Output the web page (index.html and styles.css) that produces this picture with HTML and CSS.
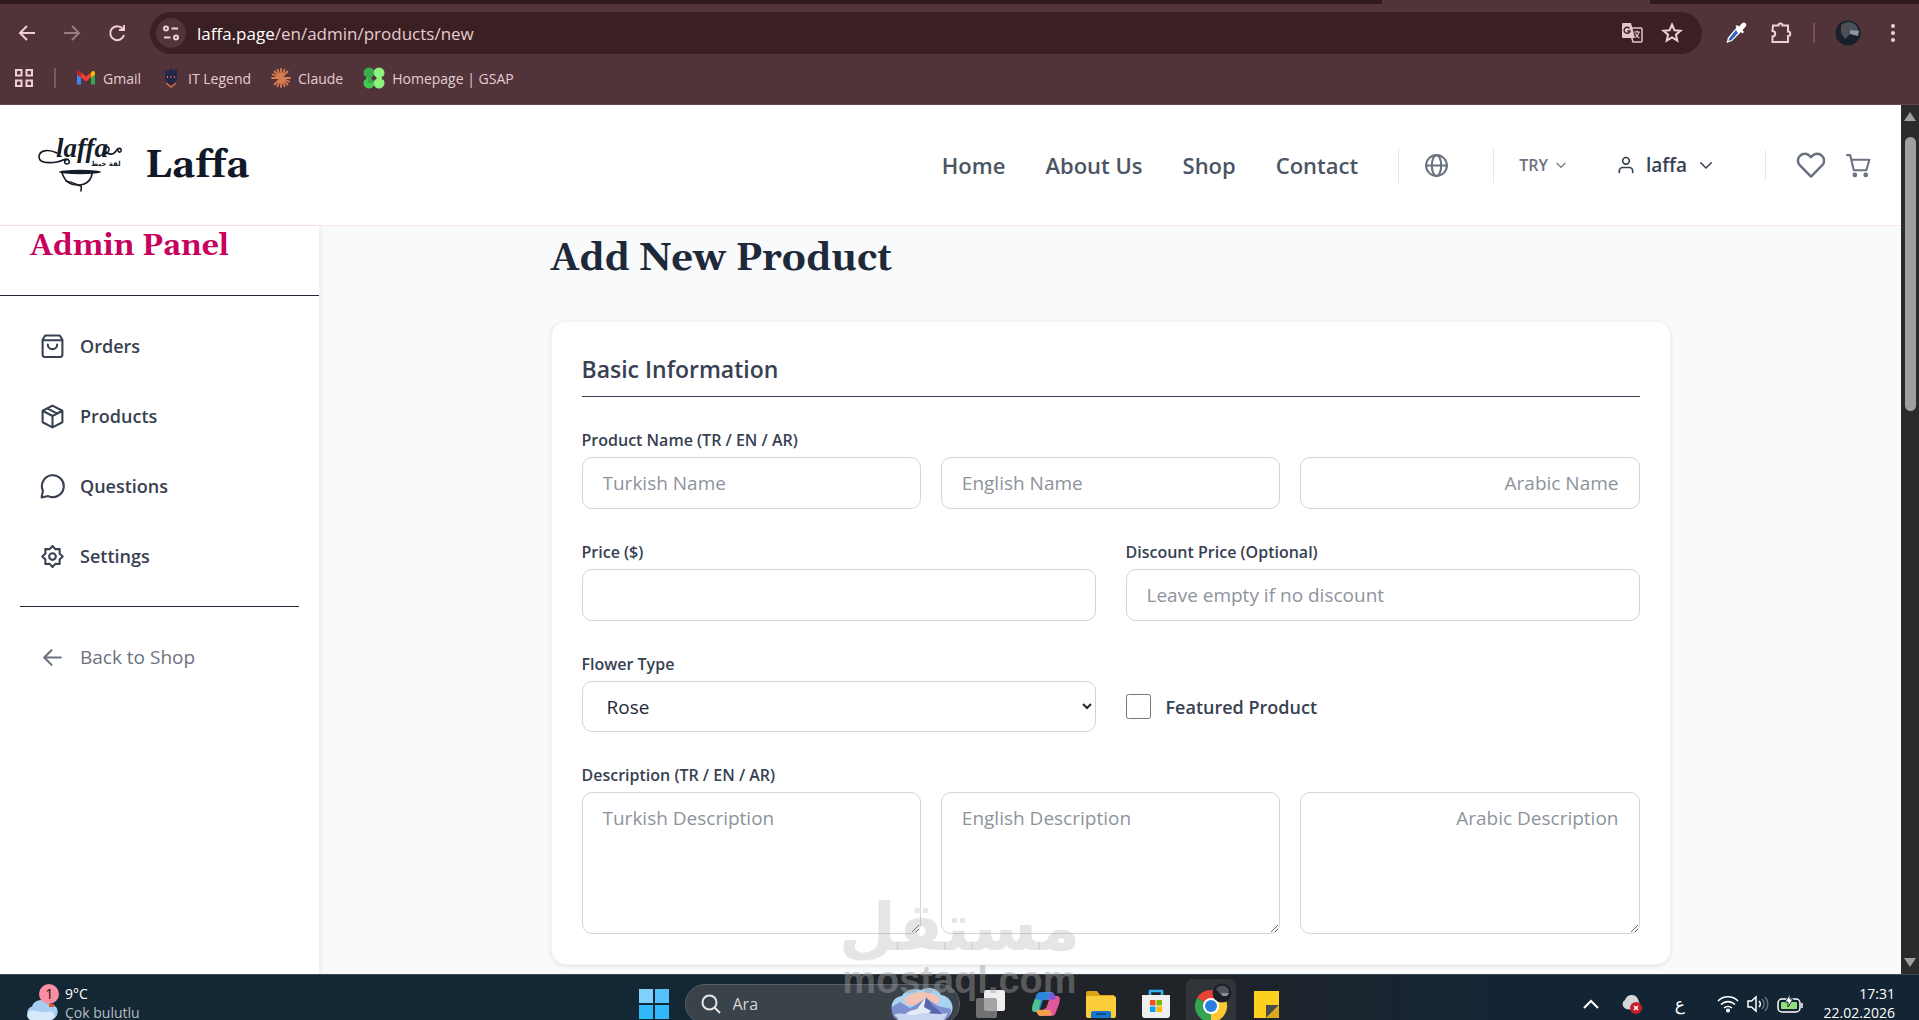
FILE: index.html
```html
<!DOCTYPE html>
<html lang="en">
<head>
    <meta charset="utf-8">
    <title>Laffa - Add New Product</title>
    <link rel="stylesheet" href="styles.css">
</head>
<body>
<!-- browser -->
<div class="browser">
    <div class="tabstrip"><span class="tab"></span></div>
    <div class="toolbar">
        <button class="tool" type="button" aria-label="Back">
            <svg width="24" height="24" viewBox="0 0 24 24" class="line"><path d="M20 12H5M12 5l-7 7 7 7"/></svg>
        </button>
        <button class="tool dim" type="button" aria-label="Forward">
            <svg width="24" height="24" viewBox="0 0 24 24" class="line"><path d="M4 12h15M12 5l7 7-7 7"/></svg>
        </button>
        <button class="tool" type="button" aria-label="Reload">
            <svg width="24" height="24" viewBox="0 0 24 24" class="line"><path d="M19 14a7 7 0 1 1-1.500-6.500L19 9M19 4v5h-5"/></svg>
        </button>
        <div class="address">
            <button class="site-info" type="button" aria-label="Site information">
                <svg width="20" height="20" viewBox="0 0 20 20" class="line"><circle cx="5" cy="5.500" r="2"/><path d="M10.500 5.500H17M3 14.500h6.500"/><circle cx="15" cy="14.500" r="2"/></svg>
            </button>
            <span class="url"><b>laffa.page</b>/en/admin/products/new</span>
            <button class="in-address" type="button" aria-label="Translate">
                <svg width="24" height="24" viewBox="0 0 24 24"><path d="M9 7h12a1 1 0 0 1 1 1v12a1 1 0 0 1-1 1h-8z" fill="none" stroke="#e3c5c9" stroke-width="1.500"/><path d="M3 2h8l4 15H3a1 1 0 0 1-1-1V3a1 1 0 0 1 1-1z" fill="#e3c5c9"/><path d="M9.500 7.500A3 3 0 1 0 10 10H7.500" fill="none" stroke="#3a1f23" stroke-width="1.400"/><path d="M14 11h6M17 9.500V11M19 11c-.5 3-2 4.500-3.500 5.500M15.500 12.500c.8 2 2 3.500 4 4.500" fill="none" stroke="#e3c5c9" stroke-width="1.200"/></svg>
            </button>
            <button class="in-address" type="button" aria-label="Bookmark this page">
                <svg width="24" height="24" viewBox="0 0 24 24" class="line"><path d="M12 3.500l2.400 5.700 6.100.5-4.600 4 1.400 6-5.300-3.200-5.300 3.200 1.400-6-4.600-4 6.100-.5z"/></svg>
            </button>
        </div>
        <button class="tool" type="button" aria-label="Color picker">
            <svg width="24" height="24" viewBox="0 0 24 24"><path d="M13 6l-9 10.500L2.500 22l5.500-2 9.500-9.500z" fill="#fff"/><path d="M12 9l-6.500 8-1 3 3-1L14 12z" fill="#2d5fc4"/><path d="M11.500 5.500l7 7 1.500-1.500-1.500-2 3.300-3.500a2.500 2.500 0 0 0-3.500-3.500L15 5.500 13 4z" fill="#fff"/></svg>
        </button>
        <button class="tool" type="button" aria-label="Extensions">
            <svg width="24" height="24" viewBox="0 0 24 24" class="line"><path d="M4 4.500h5.500a2 2 0 0 1 4 0H19v6a2 2 0 0 1 0 4.500v6H3.500v-5.500a2.700 2.700 0 0 0 0-5.400z"/></svg>
        </button>
        <span class="tool-sep"></span>
        <button class="tool" type="button" aria-label="Profile">
            <svg width="26" height="26" viewBox="0 0 26 26"><circle cx="13" cy="13" r="12.500" fill="#17202b"/><path d="M6 5a11 11 0 0 1 15 0l3 6-9 3-5 5-4-6z" fill="#48525a"/><path d="M15 10l9 1-1 5-8-2z" fill="#8d979e"/><path d="M7 8l3-4 3 2-2 6z" fill="#5b4b48"/></svg>
        </button>
        <button class="tool" type="button" aria-label="Menu">
            <svg width="24" height="24" viewBox="0 0 24 24" fill="#f0cfd4"><circle cx="12" cy="5" r="2"/><circle cx="12" cy="12" r="2"/><circle cx="12" cy="19" r="2"/></svg>
        </button>
    </div>
    <div class="bookmarks">
        <button class="apps" type="button" aria-label="All tabs">
            <svg width="20" height="20" viewBox="0 0 20 20" class="line"><path d="M2 2h5.500v5.500H2zM12.500 2H18v5.500h-5.500zM2 12.500h5.500V18H2zM12.500 12.500H18V18h-5.500z"/></svg>
        </button>
        <span class="bookmark-sep"></span>
        <a href="#">
            <svg width="20" height="20" viewBox="0 0 20 20"><path d="M1 6v10.500h4V9z" fill="#4285f4"/><path d="M19 6v10.500h-4V9z" fill="#34a853"/><path d="M15 4.500v5L19 6.500V5c0-2-2-2.500-3-1.500z" fill="#fbbc04"/><path d="M1 5v1.500l4 3v-5L4 3.500C3 2.500 1 3 1 5z" fill="#c5221f"/><path d="M5 4.500l5 4 5-4v5l-5 4-5-4z" fill="#ea4335"/></svg>
            Gmail
        </a>
        <a href="#">
            <svg width="20" height="20" viewBox="0 0 20 20"><path d="M4 1l3 2 3-3 3 3 3-2v10c0 3-3 5-6 6-3-1-6-3-6-6z" fill="#262648"/><path d="M7 8l-1 1 1 1M13 8l1 1-1 1M9 9h2" stroke="#e2704a" fill="none"/><path d="M5 15l5 4 5-4" fill="none" stroke="#d96f42" stroke-width="1.500"/></svg>
            IT Legend
        </a>
        <a href="#">
            <svg width="20" height="20" viewBox="0 0 20 20" stroke="#d97c4f" stroke-width="1.800" stroke-linecap="round"><path d="M10 1v18M1 10h18M3.500 3.500l13 13M16.500 3.500l-13 13M6.500 1.800l7 16.400M13.500 1.800l-7 16.400M1.800 6.500l16.400 7"/></svg>
            Claude
        </a>
        <a href="#">
            <svg width="22" height="22" viewBox="0 0 22 22"><circle cx="6" cy="6" r="5.500" fill="#3bab4c"/><circle cx="16" cy="6" r="5.500" fill="#8df27e"/><circle cx="6" cy="16" r="5.500" fill="#42c952"/><circle cx="16" cy="16" r="5.500" fill="#8df27e"/><path d="M5 6h6v10H5z" fill="#3bab4c"/><path d="M11 6h6v10h-6z" fill="#8df27e"/><path d="M11 8l3 3-3 3-3-3zM0 11l3-2v4zM22 11l-3-2v4z" fill="#50343a"/></svg>
            Homepage | GSAP
        </a>
    </div>
</div>

<!-- page -->
<div class="viewport">
    <div class="site">
        <header class="site-header">
            <a class="brand" href="#">
                <svg class="brand-logo" width="86" height="64" viewBox="0 0 86 64">
                    <g fill="none" stroke="#141c28" stroke-width="1.600" stroke-linecap="round">
                        <path d="M20 20C10 15 2 18 2 24c0 8 18 6 24 3 7-3 8 4 4 4-3 0-3-3-1-4"/>
                        <path d="M66 20c4 3 8-4 5-6-3-1-4 4-1 6 4 2 7 1 9-2 2-4 6-3 5 0-1 2-3 1-3-1"/>
                        <path d="M25 40c3 8 7 12 16 12 10 0 14-7 14-12"/>
                        <path d="M29 48c6 1 10 3 15 5 1 1 0 3 0 5"/>
                    </g>
                    <ellipse cx="43" cy="39" rx="21" ry="2.200" fill="#141c28"/>
                    <text x="19" y="24" class="logo-script">laffa</text>
                    <text x="54" y="33" class="logo-arabic">لفة خيط</text>
                </svg>
                <span class="brand-name">Laffa</span>
            </a>
            <nav class="links">
                <a href="#">Home</a>
                <a href="#">About Us</a>
                <a href="#">Shop</a>
                <a href="#">Contact</a>
            </nav>
            <div class="lang">
                <button type="button" aria-label="Language">
                    <svg width="25" height="25" viewBox="0 0 24 24" class="icon"><circle cx="12" cy="12" r="10"/><ellipse cx="12" cy="12" rx="4.500" ry="10"/><path d="M2 12h20"/></svg>
                </button>
            </div>
            <div class="currency">
                <button type="button">TRY
                    <svg width="14" height="14" viewBox="0 0 24 24" class="icon"><path d="M5 9l7 7 7-7"/></svg>
                </button>
            </div>
            <button class="account" type="button">
                <svg width="20" height="20" viewBox="0 0 24 24" class="icon"><circle cx="12" cy="7" r="4"/><path d="M4 21v-2a4 4 0 0 1 4-4h8a4 4 0 0 1 4 4v2"/></svg>
                <span>laffa</span>
                <svg width="18" height="18" viewBox="0 0 24 24" class="icon"><path d="M5 9l7 7 7-7"/></svg>
            </button>
            <div class="shop-actions">
                <a href="#" aria-label="Favorites">
                    <svg width="30" height="30" viewBox="0 0 24 24" class="icon"><path d="M20.840 4.610a5.500 5.500 0 0 0-7.780 0L12 5.670l-1.060-1.060a5.500 5.500 0 0 0-7.780 7.780L12 21.230l8.840-8.840a5.500 5.500 0 0 0 0-7.780z"/></svg>
                </a>
                <a href="#" aria-label="Cart">
                    <svg width="25" height="25" viewBox="0 0 24 24" class="icon"><path d="M1 2h3l3.500 14.500h12L22.500 6.500H5"/><circle cx="8.500" cy="21" r="1.300" fill="currentColor"/><circle cx="19" cy="21" r="1.300" fill="currentColor"/></svg>
                </a>
            </div>
        </header>
        <div class="admin">
            <aside class="sidebar">
                <div class="sidebar-title">Admin Panel</div>
                <nav class="sidebar-nav">
                    <a href="#">
                        <svg width="25" height="25" viewBox="0 0 24 24" class="icon"><path d="M5 1.500h14l2.500 4V20a2 2 0 0 1-2 2h-15a2 2 0 0 1-2-2V5.500zM2.500 6h19M16.500 10a4.500 4.500 0 0 1-9 0"/></svg>
                        Orders
                    </a>
                    <a href="#">
                        <svg width="25" height="25" viewBox="0 0 24 24" class="icon"><path d="M12 1.500l9.500 5v11l-9.500 5-9.500-5v-11zM2.500 6.500l9.500 5 9.500-5M12 11.500v11M7 4.200l9.500 5"/></svg>
                        Products
                    </a>
                    <a href="#">
                        <svg width="25" height="25" viewBox="0 0 24 24" class="icon"><path d="M7.900 21.200A10.500 10.500 0 1 0 2.800 16.100L1.500 22.500z"/></svg>
                        Questions
                    </a>
                    <a href="#">
                        <svg width="25" height="25" viewBox="0 0 24 24" class="icon"><path d="M12 2l2.700 2.900 4.200-.1-.1 4.300 3 2.900-3 2.900.1 4.300-4.200-.1-2.700 2.900-2.700-2.900-4.200.1.100-4.300-3-2.900 3-2.900-.1-4.300 4.200.1z"/><circle cx="12" cy="12" r="3.200"/></svg>
                        Settings
                    </a>
                </nav>
                <div class="sidebar-back">
                    <a href="#">
                        <svg width="25" height="25" viewBox="0 0 24 24" class="icon"><path d="M20 12H4M11 5l-7 7 7 7"/></svg>
                        Back to Shop
                    </a>
                </div>
            </aside>
            <main class="content">
                <div class="content-inner">
                    <h1>Add New Product</h1>
                    <form class="card">
                        <h2>Basic Information</h2>
                        <div class="field">
                            <label for="name_tr">Product Name (TR / EN / AR)</label>
                            <div class="cols-3">
                                <input type="text" id="name_tr" placeholder="Turkish Name">
                                <input type="text" id="name_en" placeholder="English Name" aria-label="English Name">
                                <input type="text" id="name_ar" class="right" placeholder="Arabic Name" aria-label="Arabic Name">
                            </div>
                        </div>
                        <div class="cols-2">
                            <div class="field">
                                <label for="price">Price ($)</label>
                                <input type="text" id="price">
                            </div>
                            <div class="field">
                                <label for="discount">Discount Price (Optional)</label>
                                <input type="text" id="discount" placeholder="Leave empty if no discount">
                            </div>
                        </div>
                        <div class="cols-2">
                            <div class="field">
                                <label for="flower">Flower Type</label>
                                <select id="flower">
                                    <option>Rose</option>
                                </select>
                            </div>
                            <div class="check">
                                <input type="checkbox" id="featured">
                                <label for="featured">Featured Product</label>
                            </div>
                        </div>
                        <div class="field">
                            <label for="desc_tr">Description (TR / EN / AR)</label>
                            <div class="cols-3">
                                <textarea id="desc_tr" rows="4" placeholder="Turkish Description"></textarea>
                                <textarea id="desc_en" rows="4" placeholder="English Description" aria-label="English Description"></textarea>
                                <textarea id="desc_ar" rows="4" class="right" placeholder="Arabic Description" aria-label="Arabic Description"></textarea>
                            </div>
                        </div>
                    </form>
                </div>
            </main>
        </div>
    </div>
    <div class="scrollbar">
        <span class="arrow-up"></span>
        <span class="thumb"></span>
        <span class="arrow-down"></span>
    </div>
</div>

<!-- taskbar -->
<div class="taskbar">
    <div class="taskbar-row">
        <div class="weather">
            <svg width="34" height="42" viewBox="0 0 34 42"><path d="M8 37a7 7 0 0 1-1-13.500 9 9 0 0 1 16-2.500 8 8 0 0 1 3 16z" fill="#a9cdf2"/><path d="M5 37a5 5 0 0 1 0-9c6-2 10 2 16 1 4-1 7-1 8 2 1 4-1 6-4 6z" fill="#d6e9fb"/><circle cx="24" cy="11" r="10" fill="#f98fa2"/><path d="M24 21h5v3h-5z" fill="#e0532f"/><text x="20" y="16" class="badge-number">1</text></svg>
            <div class="weather-text">
                <span>9°C</span>
                <span class="muted">Çok bulutlu</span>
            </div>
        </div>
        <div class="tasks">
            <button class="start" type="button" aria-label="Start">
                <svg width="30" height="30" viewBox="0 0 30 30"><path d="M0 0h14v14H0z" fill="#7fd0fb"/><path d="M16 0h14v14H16z" fill="#55c2fb"/><path d="M0 16h14v14H0zM16 16h14v14H16z" fill="#31b8fa"/></svg>
            </button>
            <div class="search">
                <svg width="20" height="20" viewBox="0 0 20 20" fill="none" stroke="#e6e6e6" stroke-width="2"><circle cx="8.500" cy="8.500" r="7"/><path d="M13.500 13.500L19 19"/></svg>
                <input type="text" placeholder="Ara" aria-label="Ara">
                <svg width="64" height="34" viewBox="0 0 64 34"><path d="M8 30C-2 26 0 10 12 9 16 1 28 2 31 3c6-4 17-2 20 5 10 1 15 13 9 20l-6 6H12z" fill="#a9d3f3"/><path d="M14 12c8-9 30-9 36 0l-4 6H16z" fill="#f3c3b4"/><path d="M2 20l8-5 10 6 4-2 12-8 12 8 13 3c0 8-5 12-12 12H12C5 34 1 28 2 20z" fill="#7d90cd"/><path d="M7 32l13-8 7-2 9-12 4 8 8 4 8 7-6 5H12z" fill="#e6ebf8"/><path d="M36 10l-2 10 7 4-5 5 20 1-8-8-5-3z" fill="#5568ab"/><path d="M4 28c8-4 16 2 24-1s18 2 30-1l-5 8H12z" fill="#c9d6f1"/></svg>
            </div>
            <button type="button" aria-label="Task view">
                <svg width="32" height="32" viewBox="0 0 32 32"><rect x="9" y="2" width="21" height="21" rx="2" fill="#eeeeee"/><rect x="1" y="10" width="21" height="20" rx="2" fill="#8c8c8c" fill-opacity=".75"/></svg>
            </button>
            <button type="button" aria-label="Copilot">
                <svg width="32" height="32" viewBox="0 0 32 32"><path d="M11 4h10c2 0 3 2 4 4l1 4H13L9 24H5C1 24 2 19 3 16l3-8c1-3 2-4 5-4z" fill="#2d86db"/><path d="M21 28H11c-3 0-4-3-5-7l6 1 4-2 4-12h7c4 0 3 5 2 8l-3 8c-1 3-2 4-5 4z" fill="#e3579b"/><path d="M3 16l2-5 6 1-3 12H5c-4 0-3-4-2-8z" fill="#4cc48c"/><path d="M11 28c-3 0-4-3-5-6h14l2 5z" fill="#f2a04a"/><path d="M20 8l1-4c3 0 4 4 5 7l-6 1z" fill="#8053d8"/><path d="M14 12h5l-3 8h-5z" fill="#20242b"/></svg>
            </button>
            <button type="button" aria-label="File Explorer">
                <svg width="32" height="32" viewBox="0 0 32 32"><path d="M1 5a2 2 0 0 1 2-2h9l3 4h14v8H1z" fill="#dca21c"/><path d="M1 8h28a2 2 0 0 1 2 2v18a2 2 0 0 1-2 2H3a2 2 0 0 1-2-2z" fill="#fbcd3a"/><path d="M6 30v-5a2 2 0 0 1 2-2h16a2 2 0 0 1 2 2v5z" fill="#1b75cc"/><path d="M11 26h10" stroke="#0b4c91" stroke-width="2"/></svg>
            </button>
            <button type="button" aria-label="Microsoft Store">
                <svg width="32" height="32" viewBox="0 0 32 32"><path d="M10 8V3h12v5" fill="none" stroke="#35b4f2" stroke-width="2.500"/><path d="M2 7h28v20a3 3 0 0 1-3 3H5a3 3 0 0 1-3-3z" fill="#efefef"/><path d="M10 12h5.500v5.500H10z" fill="#f25022"/><path d="M16.500 12H22v5.500h-5.500z" fill="#7fba00"/><path d="M10 18.500h5.500V24H10z" fill="#00a4ef"/><path d="M16.500 18.500H22V24h-5.500z" fill="#ffb900"/></svg>
            </button>
            <button class="active" type="button" aria-label="Google Chrome">
                <svg width="46" height="46" viewBox="0 0 46 46"><path d="M23 25L9.100 17a16 16 0 0 1 27.800 0z" fill="#e94335"/><path d="M23 25L9.100 17A16 16 0 0 0 23 41z" fill="#35a353"/><path d="M23 25l13.900-8A16 16 0 0 1 23 41z" fill="#fcc934"/><circle cx="23" cy="25" r="8" fill="#fff"/><circle cx="23" cy="25" r="6" fill="#2b7de1"/><circle cx="34" cy="12" r="9.500" fill="#1b2026"/><path d="M28 8c4-5 10-4 13 1l-1 5-8-1z" fill="#4d5358"/><path d="M33 12h8l-2 3h-5z" fill="#8b9297"/></svg>
            </button>
            <button type="button" aria-label="Sticky Notes">
                <svg width="32" height="32" viewBox="0 0 32 32"><path d="M4 3h25v27H4z" fill="#fdd020"/><path d="M16 30V17h13z" fill="#4a4a4c"/><path d="M17 30l12-13v13z" fill="#dca71c"/></svg>
            </button>
        </div>
        <div class="tray">
            <svg width="16" height="16" viewBox="0 0 16 16" fill="none" stroke="#fff" stroke-width="2"><path d="M1 12l7-7 7 7"/></svg>
            <svg class="tray-cloud" width="22" height="20" viewBox="0 0 22 20"><path d="M5 15a5 5 0 0 1-1-9 7 7 0 0 1 13-1l2 6-7 5z" fill="#d5d7da"/><circle cx="15" cy="14" r="6" fill="#c3202c"/><path d="M13 12l4 4M17 12l-4 4" stroke="#fff" stroke-width="1.500"/></svg>
            <span class="tray-lang">ع</span>
            <svg width="22" height="18" viewBox="0 0 22 18" fill="none" stroke="#fff" stroke-width="1.600"><path d="M1 6a14 14 0 0 1 20 0M4 9.500a10 10 0 0 1 14 0M7 13a6 6 0 0 1 8 0"/><circle cx="11" cy="15.500" r="1.300" fill="#fff"/></svg>
            <svg width="22" height="18" viewBox="0 0 22 18" fill="none" stroke="#fff" stroke-width="1.500"><path d="M1 6h3.500L9 2v14l-4.500-4H1zM12 6a4 4 0 0 1 0 6"/><path d="M15 4a7 7 0 0 1 0 10M18 2a10 10 0 0 1 0 14" stroke="#63717c"/></svg>
            <svg width="26" height="20" viewBox="0 0 26 20"><rect x="1" y="5" width="22" height="13" rx="4" fill="none" stroke="#fff" stroke-width="1.500"/><rect x="4" y="8" width="16" height="7" rx="1" fill="#92e07d"/><path d="M25 9v5" stroke="#fff" stroke-width="1.500"/><path d="M13 0L8 8h3v5l5-8h-3z" fill="#fff" stroke="#132533"/></svg>
            <div class="clock">
                <span>17:31</span>
                <span>22.02.2026</span>
            </div>
        </div>
    </div>
</div>

<div class="watermark">
    <span class="watermark-ar" lang="ar">مستقل</span>
    <span class="watermark-en">mostaql.com</span>
</div>
</body>
</html>
```
FILE: styles.css
```css
* {
    box-sizing: border-box;
}

body {
    margin: 0;
    height: 100vh;
    display: flex;
    flex-direction: column;
    overflow: hidden;
    font-family: "Open Sans", "Noto Sans", sans-serif;
    font-size: 18px;
    color: #1f2937;
}

a {
    color: inherit;
    text-decoration: none;
}

button {
    display: flex;
    align-items: center;
    justify-content: center;
    padding: 0;
    border: 0;
    background: none;
    color: inherit;
    font: inherit;
}

svg {
    display: block;
    flex-shrink: 0;
}

.line {
    fill: none;
    stroke: #f0cfd4;
    stroke-width: 2;
}

.icon {
    fill: none;
    stroke: currentColor;
    stroke-width: 2;
    stroke-linecap: round;
    stroke-linejoin: round;
}

/* browser */
.browser {
    flex-shrink: 0;
    background: #50343a;
    border-bottom: 1px solid #65484d;
    color: #e6ccd0;
}

.tabstrip {
    height: 4px;
    background: #301a1f;
}

.tab {
    display: block;
    width: 14%;
    height: 4px;
    margin-left: 72%;
    background: #50343a;
}

.toolbar {
    display: flex;
    align-items: center;
    height: 58px;
    padding: 0 4px;
}

.tool {
    width: 45px;
    height: 42px;
}

.dim {
    opacity: .45;
}

.tool-sep {
    width: 2px;
    height: 20px;
    margin: 0 10px;
    background: #7a4f57;
}

.address {
    flex: 1;
    display: flex;
    align-items: center;
    height: 42px;
    margin: 0 11px;
    padding: 0 10px 0 6px;
    border-radius: 21px;
    background: #3a1f23;
}

.site-info {
    width: 30px;
    height: 30px;
    border-radius: 15px;
    background: #50343a;
}

.url {
    flex: 1;
    margin-left: 11px;
    font-size: 17px;
}

.url b {
    font-weight: 400;
    color: #fff;
}

.in-address {
    width: 40px;
    height: 40px;
}

.bookmarks {
    display: flex;
    align-items: center;
    height: 42px;
    padding: 0 14px 10px;
    gap: 20px;
    font-size: 14px;
}

.bookmarks a {
    display: flex;
    align-items: center;
    gap: 7px;
}

.bookmark-sep {
    width: 2px;
    height: 20px;
    background: #7a5a60;
}

/* page */
.viewport {
    flex: 1;
    display: flex;
    min-height: 0;
}

.site {
    flex: 1;
    display: flex;
    flex-direction: column;
    min-width: 0;
    overflow: hidden;
    background: #f9fafb;
}

.site-header {
    display: flex;
    align-items: center;
    flex-shrink: 0;
    height: 121px;
    padding: 0 30px 0 37px;
    background: #fff;
    border-bottom: 1px solid #fce7f0;
    color: #6b7280;
}

.brand {
    display: flex;
    align-items: center;
    gap: 22px;
    margin-right: auto;
}

.brand-name {
    font-family: Gelasio, Georgia, "Liberation Serif", serif;
    font-size: 39px;
    font-weight: 700;
    color: #111827;
}

.logo-script {
    font-family: "Liberation Serif", serif;
    font-size: 27px;
    font-style: italic;
    font-weight: 700;
    fill: #141c28;
}

.logo-arabic {
    font-family: "DejaVu Sans", sans-serif;
    font-size: 7px;
    font-weight: 700;
    fill: #141c28;
}

.links {
    display: flex;
    gap: 40px;
    margin-right: 40px;
    font-size: 22px;
    font-weight: 600;
    line-height: 32px;
    color: #4b5563;
}

.lang,
.currency {
    display: flex;
    align-items: center;
    height: 35px;
    padding-left: 25px;
    border-left: 1px solid #e5e7eb;
}

.lang {
    padding-right: 44px;
}

.currency {
    padding-right: 48px;
    font-size: 16px;
    font-weight: 600;
}

.currency button {
    gap: 6px;
}

.account {
    gap: 10px;
    margin-right: 50px;
    color: #374151;
    font-size: 19px;
    font-weight: 600;
}

.shop-actions {
    display: flex;
    align-items: center;
    gap: 20px;
    height: 30px;
    padding-left: 30px;
    border-left: 1px solid #e5e7eb;
}

.admin {
    flex: 1;
    display: flex;
    min-height: 0;
}

.sidebar {
    flex-shrink: 0;
    width: 320px;
    background: #fff;
    border-right: 1px solid #f1f2f4;
    box-shadow: 0 0 5px rgba(0, 0, 0, .08);
}

.sidebar-title {
    height: 70px;
    padding-left: 30px;
    border-bottom: 1px solid #1f2937;
    font-family: Gelasio, Georgia, "Liberation Serif", serif;
    font-size: 30px;
    font-weight: 700;
    line-height: 40px;
    color: #c6005c;
}

.sidebar-nav {
    display: flex;
    flex-direction: column;
    gap: 10px;
    padding: 20px;
    font-size: 18px;
    font-weight: 600;
}

.sidebar a {
    display: flex;
    align-items: center;
    gap: 15px;
    height: 60px;
    padding: 0 20px;
    color: #374151;
}

.sidebar-back {
    margin: 0 20px;
    padding-top: 20px;
    border-top: 1px solid #1f2937;
    font-size: 19px;
}

.sidebar .sidebar-back a {
    color: #6b7280;
}

.content {
    flex: 1;
    min-width: 0;
    overflow: hidden;
}

.content-inner {
    max-width: 1120px;
    margin: 0 auto;
}

h1 {
    margin: 0 0 37px;
    padding-top: 8px;
    font-family: Gelasio, Georgia, "Liberation Serif", serif;
    font-size: 38px;
    line-height: 50px;
    color: #1e2939;
}

.card {
    display: flex;
    flex-direction: column;
    gap: 30px;
    padding: 30px;
    background: #fff;
    border: 1px solid #f3f4f6;
    border-radius: 15px;
    box-shadow: 0 1px 4px rgba(0, 0, 0, .1);
}

h2 {
    margin: 0;
    padding-bottom: 10px;
    border-bottom: 1px solid #374151;
    font-size: 23px;
    font-weight: 600;
    line-height: 34px;
    color: #374151;
}

.field {
    display: flex;
    flex-direction: column;
    gap: 3px;
    min-width: 0;
}

.field label {
    font-size: 16px;
    font-weight: 600;
    line-height: 27px;
    color: #374151;
}

.cols-3 {
    display: grid;
    grid-template-columns: repeat(3, 1fr);
    gap: 20px;
}

.cols-2 {
    display: grid;
    grid-template-columns: repeat(2, 1fr);
    gap: 30px;
}

.field input,
.field select,
.field textarea {
    display: block;
    width: 100%;
    padding: 10px 20px;
    border: 1px solid #d1d5dc;
    border-radius: 10px;
    background: #fff;
    color: #1f2937;
    font-family: inherit;
    font-size: 19px;
    line-height: 30px;
}

.field input {
    height: 52px;
}

.field select {
    height: 51px;
}

.field .right {
    text-align: right;
}

::placeholder {
    color: #8d939d;
}

.check {
    display: flex;
    align-items: center;
    gap: 15px;
    padding-top: 30px;
    color: #374151;
    font-size: 18px;
    font-weight: 600;
}

.check input {
    width: 25px;
    height: 25px;
    margin: 0;
}

/* scrollbar */
.scrollbar {
    display: flex;
    flex-direction: column;
    align-items: center;
    width: 18px;
    padding: 7px 0;
    background: #2b2b2b;
}

.arrow-up,
.arrow-down {
    border: 6px solid transparent;
    border-top-width: 0;
    border-bottom: 9px solid #9f9f9f;
}

.arrow-down {
    margin-top: auto;
    border-top: 9px solid #9f9f9f;
    border-bottom-width: 0;
    border-bottom-color: transparent;
}

.thumb {
    width: 11px;
    height: 32%;
    margin-top: 16px;
    border-radius: 6px;
    background: #9f9f9f;
}

/* taskbar */
.taskbar {
    flex-shrink: 0;
    height: 46px;
    overflow: hidden;
    background: linear-gradient(90deg, #132735 0, #132735 38%, #202327 48%, #202327 62%, #132535 78%);
    border-top: 1px solid #3b4750;
    color: #fff;
    font-size: 14px;
}

.taskbar-row {
    display: grid;
    grid-template-columns: 1fr auto 1fr;
    align-items: center;
    height: 58px;
}

.weather {
    display: flex;
    align-items: center;
    gap: 6px;
    padding-left: 25px;
}

.weather-text,
.clock {
    display: flex;
    flex-direction: column;
    padding-bottom: 2px;
    line-height: 19px;
}

.muted {
    color: #b5bcc2;
}

.badge-number {
    font-size: 15px;
    fill: #2b1218;
}

.tasks {
    display: flex;
    align-items: center;
    gap: 5px;
}

.tasks button {
    width: 50px;
    height: 50px;
    border-radius: 6px;
}

.tasks .active {
    background: #303439;
}

.search {
    display: flex;
    align-items: center;
    width: 275px;
    height: 40px;
    margin: 0 1px;
    padding: 0 5px 0 15px;
    border: 1px solid #5a5f66;
    border-radius: 20px;
    background: #3a424a;
}

.search input {
    flex: 1;
    width: 0;
    padding: 0 12px;
    border: 0;
    background: none;
    color: #fff;
    font-family: inherit;
    font-size: 16px;
}

.search input::placeholder {
    color: #d5d7d9;
}

.tray {
    display: flex;
    align-items: center;
    justify-content: flex-end;
    gap: 8px;
    padding-right: 24px;
}

.tray-cloud {
    margin: 0 24px 0 14px;
}

.tray-lang {
    margin-right: 24px;
    font-family: "DejaVu Sans", sans-serif;
    font-size: 17px;
}

.clock {
    width: 84px;
    text-align: right;
}

/* watermark over the page */
.watermark {
    position: absolute;
    left: 44%;
    bottom: 20px;
    width: 230px;
    display: flex;
    flex-direction: column;
    align-items: center;
    pointer-events: none;
}

.watermark-ar {
    color: rgba(160, 160, 160, .28);
    font-family: "DejaVu Sans", sans-serif;
    font-size: 66px;
    font-weight: 700;
    line-height: 64px;
}

.watermark-en {
    color: rgba(160, 160, 160, .45);
    font-family: "Liberation Sans", sans-serif;
    font-size: 38px;
    font-weight: 700;
    line-height: 40px;
}
```
